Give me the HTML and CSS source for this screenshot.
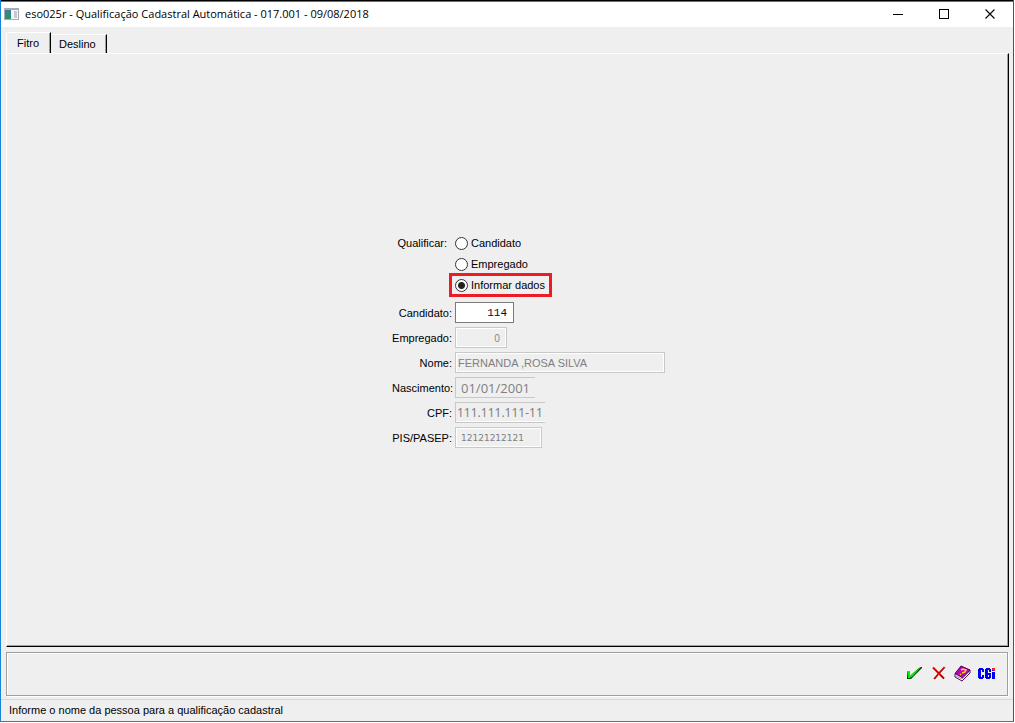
FILE: index.html
```html
<!DOCTYPE html>
<html lang="pt-BR">
<head>
<meta charset="utf-8">
<meta name="viewport" content="width=device-width, initial-scale=1">
<title>eso025r - Qualificação Cadastral Automática</title>
<link rel="stylesheet" href="styles.css">
</head>
<body>
<div class="window">
  <header class="titlebar">
    <svg class="app-icon" width="15" height="12" viewBox="0 0 15 12" shape-rendering="crispEdges" aria-hidden="true">
      <path fill="#a9adb3" d="M0 0h15v12H0z"/>
      <path fill="#f4f6f8" d="M1 2h13v9H1z"/>
      <path fill="#3b7fa0" d="M1 2h6v4H1z"/>
      <path fill="#2f8f6b" d="M1 6h6v5H1z"/>
      <path fill="#c3cbd3" d="M10 3h3v7h-3z"/>
    </svg>
    <h1 class="title">eso025r - Qualificação Cadastral Automática - 017.001 - 09/08/2018</h1>
    <div class="window-buttons">
      <button type="button" class="window-button" aria-label="Minimizar">
        <svg width="12" height="12" viewBox="0 0 12 12" shape-rendering="crispEdges"><path d="M1 6h10v1H1z"/></svg>
      </button>
      <button type="button" class="window-button" aria-label="Maximizar">
        <svg width="12" height="12" viewBox="0 0 12 12" shape-rendering="crispEdges"><path d="M1.500 1.500h9v9h-9z" fill="none" stroke="#000"/></svg>
      </button>
      <button type="button" class="window-button" aria-label="Fechar">
        <svg width="12" height="12" viewBox="0 0 12 12"><path d="M1.500 1.500l9 9M10.500 1.500l-9 9" fill="none" stroke="#000" stroke-width="1.100"/></svg>
      </button>
    </div>
  </header>

  <nav class="tabs" role="tablist">
    <button type="button" class="tab tab-active" role="tab" aria-selected="true">Fitro</button>
    <button type="button" class="tab" role="tab" aria-selected="false">Deslino</button>
  </nav>

  <main class="panel">
    <form class="form">
      <span class="label label-group" id="qualificar">Qualificar:</span>
      <div class="radios" role="radiogroup" aria-labelledby="qualificar">
        <label class="radio"><input type="radio" name="tipo">Candidato</label>
        <label class="radio"><input type="radio" name="tipo">Empregado</label>
        <label class="radio radio-marked"><input type="radio" name="tipo" checked>Informar dados</label>
      </div>
      <label class="label" for="candidato">Candidato:</label>
      <input class="field field-code" id="candidato" value="114">
      <label class="label" for="empregado">Empregado:</label>
      <input class="field field-employee" id="empregado" value="0" disabled>
      <label class="label" for="nome">Nome:</label>
      <input class="field field-name" id="nome" value="FERNANDA ,ROSA SILVA" disabled>
      <label class="label" for="nascimento">Nascimento:</label>
      <input class="field field-birth" id="nascimento" value="01/01/2001" disabled>
      <label class="label" for="cpf">CPF:</label>
      <input class="field field-cpf" id="cpf" value="111.111.111-11" disabled>
      <label class="label" for="pis">PIS/PASEP:</label>
      <input class="field field-pis" id="pis" value="12121212121" disabled>
    </form>
  </main>

  <section class="actions">
    <button type="button" class="action" aria-label="Confirmar">
      <svg width="15" height="14" viewBox="0 0 15 14">
        <path fill="#003c00" d="M0 6h3v3h1l8-7 2-1h1v1l-8 8-3 3H0z"/>
        <path fill="#00f000" d="M0 5h3v4h1l7-6 3-2-8 9-3 2H1z"/>
      </svg>
    </button>
    <button type="button" class="action" aria-label="Cancelar">
      <svg width="14" height="14" viewBox="0 0 14 14">
        <path d="M1 1.500l11 11" fill="none" stroke="#dc0000" stroke-width="2"/>
        <path d="M12.500 1L7 7l-5 6" fill="none" stroke="#dc0000" stroke-width="1.500"/>
        <path d="M13 1.500L8 7M8 8.500l4 4.500M6 9l-3 4" fill="none" stroke="#800000" stroke-width=".7"/>
      </svg>
    </button>
    <button type="button" class="action" aria-label="Ajuda">
      <svg width="17" height="17" viewBox="0 0 17 17">
        <path d="M1 9v3l7 4 8-8V5z" fill="#fff" stroke="#600060"/>
        <path d="M1 8.500L7 1l9 4-7 8z" fill="#c000c0" stroke="#500050"/>
        <path d="M2 11l6 3 7-7" fill="none" stroke="#909090"/>
        <path d="M7 5l2-1 3 1-1 2-3 1M7 9l-1 1" fill="none" stroke="#ffe000" stroke-width="1.500"/>
      </svg>
    </button>
    <button type="button" class="action" aria-label="CGI">
      <svg width="18" height="11" viewBox="0 0 18 11" shape-rendering="crispEdges">
        <path fill="#0000f0" d="M1 0h4v1h1v3H4V2H3v7h1V7h2v3H5v1H1v-1H0V1h1z"/>
        <path fill="#0000f0" d="M8 0h4v1h1v3h-2V2h-1v7h1V7h-1V5h3v5h-1v1H8v-1H7V1h1z"/>
        <path fill="#0000f0" d="M14 4h3v7h-3z"/>
        <path fill="#f02020" d="M14 0h3v3h-3z"/>
        <path fill="#0000f0" d="M14 2h1v1h-1z"/>
      </svg>
    </button>
  </section>

  <footer class="status">Informe o nome da pessoa para a qualificação cadastral</footer>
</div>
</body>
</html>
```
FILE: styles.css
```css
* { box-sizing: border-box; }

body {
  margin: 0;
  background: #fff;
  color: #000;
  font: 11px/14px "Liberation Sans", Arial, sans-serif;
}

button, input { font: inherit; color: inherit; }

.window {
  display: flex;
  flex-direction: column;
  min-height: calc(100vh - 1px);
  margin-right: 1px;
  border-left: 1px solid #1883d7;
  border-right: 1px solid #4444c8;
  border-bottom: 1px solid #1883d7;
  background: #efefef;
}

.titlebar {
  display: flex;
  align-items: center;
  height: 27px;
  padding-left: 3px;
  gap: 6px;
  border-top: 1px solid #000;
  box-shadow: inset 0 1px #1883d7;
  background: #fff;
}

.title {
  flex: 1;
  margin: 0;
  font: 11px/16px "Open Sans", "Noto Sans", sans-serif;
  white-space: nowrap;
}

.window-buttons { display: flex; }

.window-button {
  display: grid;
  place-items: center;
  width: 46px;
  height: 24px;
  padding: 0;
  border: 0;
  background: transparent;
}

.tabs {
  display: flex;
  align-items: flex-end;
  height: 26px;
  padding-left: 5px;
}

.tab {
  height: 19px;
  padding: 0 10px 0 8px;
  border: 0;
  border-top: 1px solid #fff;
  border-right: 1px solid #000;
  background: #efefef;
  box-shadow: inset -1px 0 #a0a0a0;
}

.tab-active {
  height: 21px;
  padding: 0 11px 0 10px;
  border-left: 1px solid #fff;
  border-radius: 2px 0 0 0;
}

.panel {
  display: flex;
  flex: 1;
  align-items: center;
  justify-content: center;
  margin: 0 4px 0 5px;
  padding: 0 0 18px 42px;
  border: 1px solid #fff;
  border-right-color: #000;
  border-bottom-color: #000;
  box-shadow: inset -1px -1px #a0a0a0;
}

.form {
  display: grid;
  grid-template-columns: 60px 210px;
  gap: 4px 3px;
  align-items: center;
}

.label { text-align: right; white-space: nowrap; }

.label-group {
  align-self: start;
  padding: 2px 5px 0 0;
}

.radios {
  display: grid;
  justify-items: start;
  gap: 3px;
  margin-bottom: 4px;
}

.radio {
  display: flex;
  align-items: center;
  gap: 3px;
  height: 18px;
  margin-left: -3px;
  padding: 0 4px 0 3px;
}

.radio-marked { box-shadow: 0 0 0 3px #ed1c24; }

.radio input {
  appearance: none;
  width: 13px;
  height: 13px;
  margin: 0;
  border: 1px solid #333;
  border-radius: 50%;
  background: #fff;
}

.radio input:checked {
  background: radial-gradient(circle, #222 0 3px, #fff 4px);
}

.field {
  height: 21px;
  padding: 0 2px;
  border: 1px solid #c8c8c8;
  border-radius: 0;
  background: #efefef;
  box-shadow: inset 0 0 0 1px #fff;
  color: #808080;
}

.field-code {
  width: 59px;
  padding-right: 6px;
  border-color: #7a7a7a;
  background: #fff;
  color: #200020;
  font-family: "Liberation Mono", monospace;
  text-align: right;
}

.field-employee {
  width: 52px;
  padding-right: 6px;
  font-family: "Open Sans", sans-serif;
  font-size: 10px;
  text-align: right;
}

.field-name { width: 100%; }

.field-birth {
  width: 80px;
  padding-left: 5px;
  border-right: 0;
  box-shadow: none;
  font-family: "Open Sans", sans-serif;
  font-size: 13px;
}

.field-cpf {
  width: 90px;
  padding: 0 0 0 1px;
  border-right: 0;
  box-shadow: inset 0 -1px #fff;
  font-family: "Noto Sans", sans-serif;
  font-size: 12px;
}

.field-pis {
  width: 87px;
  padding-left: 5px;
  font-family: "DejaVu Sans", sans-serif;
  font-size: 9px;
}

.actions {
  display: flex;
  align-items: center;
  justify-content: flex-end;
  gap: 7px;
  height: 44px;
  margin: 5px 5px 3px;
  padding: 0 11px 2px;
  border: 1px solid #a0a0a0;
  box-shadow: inset 1px 1px #fff, 1px 1px #fff;
}

.action {
  display: grid;
  place-items: center;
  min-width: 17px;
  padding: 0;
  border: 0;
  background: transparent;
}

.status {
  height: 22px;
  padding: 3px 8px;
  border-top: 1px solid #d7d7d7;
}
```
